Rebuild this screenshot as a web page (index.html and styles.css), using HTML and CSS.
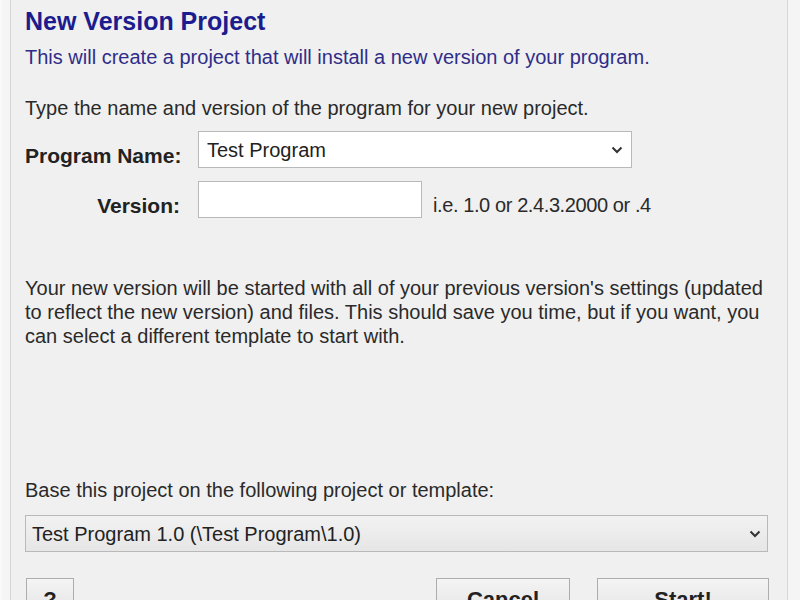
FILE: index.html
```html
<!DOCTYPE html>
<html>
<head>
<meta charset="utf-8">
<link rel="stylesheet" href="styles.css">
</head>
<body>
<div class="frame">
  <div class="panel">
    <h1 class="title">New Version Project</h1>
    <p class="subtitle">This will create a project that will install a new version of your program.</p>
    <p class="intro">Type the name and version of the program for your new project.</p>
    <div class="form">
      <label class="lbl lbl-left">Program Name:</label>
      <div class="combo">
        <span class="combo-text">Test Program</span>
        <svg class="chev" width="12" height="8" viewBox="0 0 12 8"><path d="M1.5 1.5 L6 6 L10.5 1.5" fill="none" stroke="#333" stroke-width="2"/></svg>
      </div>
      <label class="lbl">Version:</label>
      <div class="vrow">
        <div class="textbox"></div>
        <span class="hint">i.e. 1.0 or 2.4.3.2000 or .4</span>
      </div>
    </div>
    <p class="para">Your new version will be started with all of your previous version's settings (updated to reflect the new version) and files. This should save you time, but if you want, you can select a different template to start with.</p>
    <p class="base">Base this project on the following project or template:</p>
    <div class="combo combo-wide">
      <span class="combo-text">Test Program 1.0 (\Test Program\1.0)</span>
      <svg class="chev" width="12" height="8" viewBox="0 0 12 8"><path d="M1.5 1.5 L6 6 L10.5 1.5" fill="none" stroke="#333" stroke-width="2"/></svg>
    </div>
    <div class="buttons">
      <button class="btn btn-help">?</button>
      <div class="spacer"></div>
      <button class="btn btn-cancel">Cancel</button>
      <button class="btn btn-start">Start!</button>
    </div>
  </div>
</div>
</body>
</html>
```
FILE: styles.css
```css
html, body {
  margin: 0;
  padding: 0;
  background: #f3f3f3;
  overflow: hidden;
}
body {
  font-family: "Liberation Sans", Arial, sans-serif;
  color: #222;
}
.frame {
  height: 600px;
  width: 800px;
  padding: 0 12px 0 8px;
  background: #f5f5f5;
  border-left: 2px solid #fafafa;
  box-sizing: border-box;
}
.panel {
  height: 600px;
  width: 778px;
  overflow: hidden;
  border-left: 1px solid #d6d6d6;
  border-right: 1px solid #d6d6d6;
  background: #f0f0f0;
  padding: 0 0 0 14px;
  box-sizing: border-box;
}
.title {
  margin: 0;
  padding-top: 6px;
  font-size: 25px;
  line-height: 30px;
  font-weight: bold;
  color: #1c1c8e;
}
.subtitle {
  margin: 9px 0 0;
  font-size: 20px;
  line-height: 24px;
  color: #2f2d88;
}
.intro {
  margin: 27px 0 0;
  font-size: 20px;
  line-height: 24px;
  color: #2a2a2a;
}
.form {
  display: grid;
  grid-template-columns: 155px auto;
  column-gap: 18px;
  row-gap: 13px;
  margin-top: 11px;
  align-items: start;
}
.lbl {
  font-weight: bold;
  font-size: 21px;
  line-height: 24px;
  padding-top: 13px;
  text-align: right;
  white-space: nowrap;
  color: #222;
}
.lbl-left {
  text-align: left;
}
.combo {
  width: 434px;
  height: 37px;
  box-sizing: border-box;
  border: 1px solid #b9b9b9;
  background: #fff;
  display: flex;
  align-items: center;
  padding: 0 8px 0 8px;
}
.combo-text {
  flex: 1;
  font-size: 20px;
  line-height: 24px;
  color: #222;
}
.chev {
  flex: none;
}
.vrow {
  display: flex;
  align-items: flex-start;
}
.textbox {
  width: 224px;
  height: 37px;
  box-sizing: border-box;
  border: 1px solid #b9b9b9;
  background: #fff;
}
.hint {
  margin: 12px 0 0 11px;
  font-size: 20px;
  line-height: 24px;
  color: #2a2a2a;
  letter-spacing: -0.4px;
}
.para {
  margin: 58px 0 0;
  font-size: 20px;
  line-height: 24px;
  color: #2a2a2a;
  width: 750px;
}
.base {
  margin: 130px 0 0;
  font-size: 20px;
  line-height: 24px;
  color: #2a2a2a;
}
.combo-wide {
  width: 743px;
  margin-top: 13px;
  background: linear-gradient(#f2f2f2, #e6e6e6);
  padding-left: 6px;
  padding-right: 6px;
}
.buttons {
  display: flex;
  margin-top: 26px;
  width: 743px;
  gap: 27px;
}
.spacer {
  flex: 1;
}
.btn {
  height: 40px;
  border: 1px solid #adadad;
  background: linear-gradient(#f4f4f4, #e3e3e3);
  font-family: "Liberation Sans", Arial, sans-serif;
  font-weight: bold;
  font-size: 22px;
  line-height: 26px;
  color: #222;
  padding: 8px 0 0;
  display: flex;
  justify-content: center;
  align-items: flex-start;
}
.btn-help { width: 48px; margin-left: 1px; }
.btn-cancel { width: 134px; }
.btn-start { width: 172px; margin-right: -1px; }
```
